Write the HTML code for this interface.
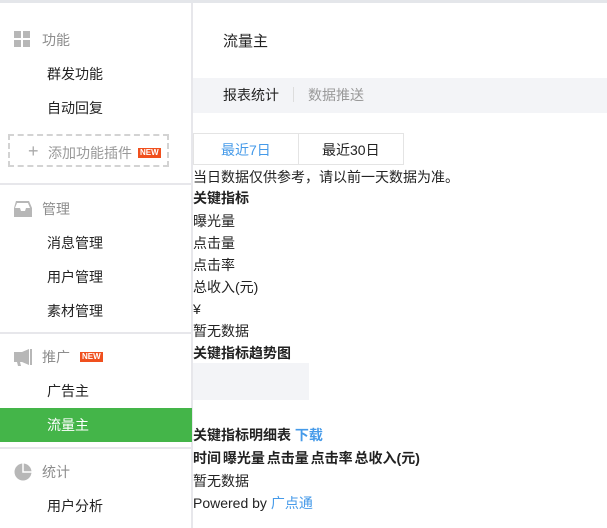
<!DOCTYPE html><html><head><meta charset="utf-8"><style>
*{margin:0;padding:0;box-sizing:border-box}
body{width:607px;height:528px;overflow:hidden;background:#fff;font-family:"Liberation Sans","Noto Sans CJK SC",sans-serif;font-size:14px;color:#222;position:relative}
.a{position:absolute;white-space:nowrap;line-height:20px}
.top{position:absolute;left:0;top:0;width:607px;height:3px;background:#e4e6ea}
.side{position:absolute;left:191px;top:3px;width:2px;height:525px;background:#e7e7eb}
.sep{position:absolute;left:0;width:192px;height:2px;background:#e7e7eb}
.h{color:#8d8d8d;font-size:14px}
.it{left:47px}
.new{position:absolute;background:#f0501e;color:#fff;font-size:8px;font-weight:bold;line-height:10px;padding:0 2px;height:10px}
.gray{color:#999}
.blue{color:#459ae9}
b{font-weight:bold}
</style></head><body>
<div class="top"></div>
<div class="side"></div>
<svg class="a" style="left:14px;top:31px" width="18" height="18"><rect x="0" y="0" width="7" height="7" fill="#b7b7b7"/><rect x="9" y="0" width="7" height="7" fill="#b7b7b7"/><rect x="0" y="9" width="7" height="7" fill="#b7b7b7"/><rect x="9" y="9" width="7" height="7" fill="#b7b7b7"/></svg>
<div class="a h" style="left:42px;top:30px">功能</div>
<div class="a it" style="top:64px">群发功能</div>
<div class="a it" style="top:98px">自动回复</div>
<div style="position:absolute;left:8px;top:134px;width:161px;height:33px;border:2px dashed #d3d3d3"></div>
<div class="a gray" style="left:28px;top:141px;font-size:18px;color:#aaa">+</div>
<div class="a" style="left:48px;top:143px;color:#999">添加功能插件</div>
<div class="new" style="left:138px;top:148px">NEW</div>
<div class="sep" style="top:183px"></div>
<svg class="a" style="left:13px;top:200px" width="20" height="18"><path d="M3 1h13l3 7v9H1V8z" fill="#b7b7b7"/><path d="M4 3h11l2 5h-4l-1 3H8L7 8H2z" fill="#fff"/></svg>
<div class="a h" style="left:42px;top:199px">管理</div>
<div class="a it" style="top:233px">消息管理</div>
<div class="a it" style="top:267px">用户管理</div>
<div class="a it" style="top:301px">素材管理</div>
<div class="sep" style="top:332px"></div>
<svg class="a" style="left:13px;top:348px" width="20" height="18"><path d="M1 4h8l7-3v16l-7-3H7l1 4H5l-1-4H1z" fill="#b7b7b7"/><rect x="17" y="1" width="2" height="16" fill="#b7b7b7"/></svg>
<div class="a h" style="left:42px;top:347px">推广</div>
<div class="new" style="left:80px;top:352px">NEW</div>
<div class="a it" style="top:381px">广告主</div>
<div style="position:absolute;left:0;top:408px;width:192px;height:34px;background:#44b549"></div>
<div class="a it" style="top:415px;color:#fff">流量主</div>
<div class="sep" style="top:447px"></div>
<svg class="a" style="left:14px;top:463px" width="18" height="18"><circle cx="9" cy="9" r="8.5" fill="#b7b7b7"/><path d="M9 0v9h9" stroke="#fff" stroke-width="1.5" fill="none"/></svg>
<div class="a h" style="left:42px;top:462px">统计</div>
<div class="a it" style="top:496px">用户分析</div>
<div class="a" style="left:223px;top:32px;font-size:15px">流量主</div>
<div style="position:absolute;left:193px;top:78px;width:414px;height:35px;background:#f3f4f7"></div>
<div class="a" style="left:223px;top:85px">报表统计</div>
<div style="position:absolute;left:293px;top:87px;width:1px;height:15px;background:#ddd"></div>
<div class="a gray" style="left:308px;top:85px">数据推送</div>
<div style="position:absolute;left:193px;top:133px;width:106px;height:32px;border:1px solid #e4e4e4"></div>
<div style="position:absolute;left:298px;top:133px;width:106px;height:32px;border:1px solid #e4e4e4"></div>
<div class="a blue" style="left:221px;top:140px">最近7日</div>
<div class="a" style="left:322px;top:140px">最近30日</div>
<div class="a" style="left:193px;top:167px">当日数据仅供参考，请以前一天数据为准。</div>
<div class="a" style="left:193px;top:188px"><b>关键指标</b></div>
<div class="a" style="left:193px;top:211px">曝光量</div>
<div class="a" style="left:193px;top:233px">点击量</div>
<div class="a" style="left:193px;top:255px">点击率</div>
<div class="a" style="left:193px;top:277px">总收入(元)</div>
<div class="a" style="left:193px;top:299px">¥</div>
<div class="a" style="left:193px;top:321px">暂无数据</div>
<div class="a" style="left:193px;top:343px"><b>关键指标趋势图</b></div>
<div style="position:absolute;left:193px;top:363px;width:116px;height:37px;background:#f3f4f7"></div>
<div class="a" style="left:193px;top:425px"><b>关键指标明细表</b> <b class="blue">下载</b></div>
<div class="a" style="left:193px;top:448px;word-spacing:-2px"><b>时间 曝光量 点击量 点击率 总收入(元)</b></div>
<div class="a" style="left:193px;top:471px">暂无数据</div>
<div class="a" style="left:193px;top:493px">Powered by <span class="blue">广点通</span></div>
</body></html>
